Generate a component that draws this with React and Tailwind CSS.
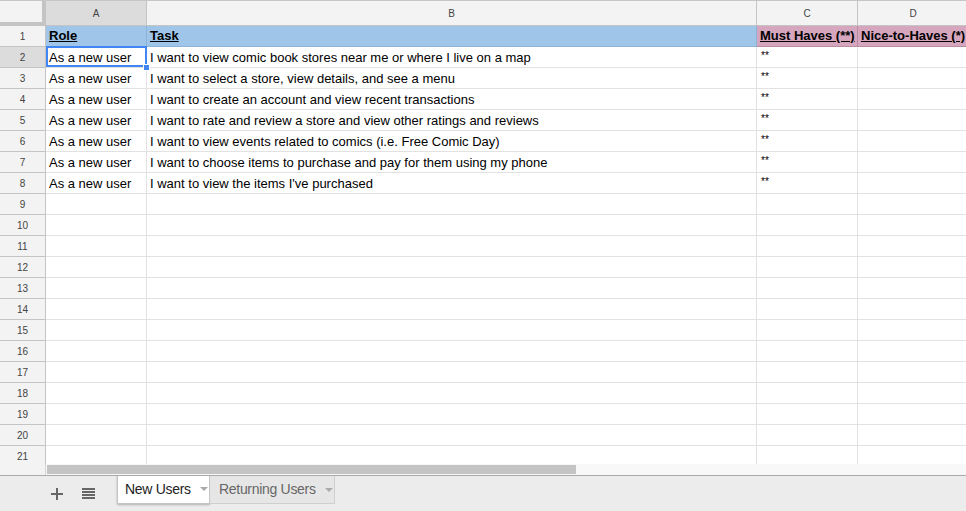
import React from 'react';

const rows = [
  { role: 'As a new user', task: 'I want to view comic book stores near me or where I live on a map', must: '**' },
  { role: 'As a new user', task: 'I want to select a store, view details, and see a menu', must: '**' },
  { role: 'As a new user', task: 'I want to create an account and view recent transactions', must: '**' },
  { role: 'As a new user', task: 'I want to rate and review a store and view other ratings and reviews', must: '**' },
  { role: 'As a new user', task: 'I want to view events related to comics (i.e. Free Comic Day)', must: '**' },
  { role: 'As a new user', task: 'I want to choose items to purchase and pay for them using my phone', must: '**' },
  { role: 'As a new user', task: "I want to view the items I've purchased", must: '**' },
];

const emptyRows = Array.from({ length: 13 }, (_, i) => i + 9);

const cell = 'border-r border-b border-[#e2e2e2] overflow-hidden whitespace-nowrap';

const Caret = ({ color }) => (
  <svg width="8" height="5" viewBox="0 0 8 5" className="ml-[9px] mt-[1px] shrink-0">
    <path d="M0 0 L8 0 L4 4 Z" fill={color} />
  </svg>
);

export default function App() {
  return (
    <div
      className="w-[966px] h-[511px] overflow-hidden bg-white flex flex-col text-[#222]"
      style={{ fontFamily: '"Liberation Sans", Arial, sans-serif' }}
    >
      {/* grid */}
      <div className="h-[464px] overflow-hidden flex flex-col">
        {/* column headers */}
        <div className="flex h-[26px] border-t border-[#c6c6c6] shrink-0">
          <div className="w-[46px] h-full bg-[#f3f3f3] border-r-[4px] border-b-[4px] border-[#c4c4c4]" />
          <div className="w-[101px] flex items-center justify-center bg-[#dcdcdc] border-r border-b border-[#c4c4c4] text-[10px] text-[#444]">A</div>
          <div className="w-[610px] flex items-center justify-center bg-[#f3f3f3] border-r border-b border-[#c4c4c4] text-[10px] text-[#444]">B</div>
          <div className="w-[101px] flex items-center justify-center bg-[#f3f3f3] border-r border-b border-[#c4c4c4] text-[10px] text-[#444]">C</div>
          <div className="flex-1 flex items-center justify-center bg-[#f3f3f3] border-b border-[#c4c4c4] text-[10px] text-[#444] pl-[2px]">D</div>
        </div>

        {/* row 1 */}
        <div className="flex h-[21px] shrink-0">
          <div className="w-[46px] flex items-center justify-center bg-[#f3f3f3] border-r border-b border-[#c4c4c4] text-[10px] text-[#444]">1</div>
          <div className="w-[101px] flex items-end pl-[3px] pb-[2px] bg-[#9fc5e8] border-r border-b border-[#8db3d6] font-bold underline text-[13px] leading-[16px] text-black">Role</div>
          <div className="w-[610px] flex items-end pl-[3px] pb-[2px] bg-[#9fc5e8] border-r border-b border-[#8db3d6] font-bold underline text-[13px] leading-[16px] text-black">Task</div>
          <div className="w-[101px] flex items-end pl-[3px] pb-[2px] bg-[#d5a6bd] border-r border-b border-[#b98ca2] font-bold underline text-[13px] leading-[16px] text-black whitespace-nowrap overflow-hidden">Must Haves (**)</div>
          <div className="flex-1 flex items-end pl-[3px] pb-[2px] bg-[#d5a6bd] border-b border-[#b98ca2] font-bold underline text-[13px] leading-[16px] text-black whitespace-nowrap overflow-hidden">Nice-to-Haves (*)</div>
        </div>

        {/* data rows */}
        {rows.map((r, i) => (
          <div key={i} className="flex h-[21px] shrink-0">
            <div className={`w-[46px] flex items-center justify-center border-r border-b border-[#c4c4c4] text-[10px] text-[#444] ${i === 0 ? 'bg-[#dcdcdc]' : 'bg-[#f3f3f3]'}`}>{i + 2}</div>
            <div className={`w-[101px] relative flex items-end pl-[3px] pb-[1px] text-[13px] leading-[16px] text-black ${i === 0 ? 'overflow-visible whitespace-nowrap border-r border-b border-[#e2e2e2]' : cell}`}>
              {r.role}
              {i === 0 && (
                <>
                  <div className="absolute left-0 top-[-1px] w-[101px] h-[21px] border-2 border-[#4285f4]" />
                  <div className="absolute right-[-4px] bottom-[-4px] w-[7px] h-[7px] bg-[#4285f4] border border-white z-10" />
                </>
              )}
            </div>
            <div className={`w-[610px] flex items-end pl-[3px] pb-[1px] text-[13px] leading-[16px] text-black ${cell}`}>{r.task}</div>
            <div className={`w-[101px] pl-[4px] pt-[3px] text-[10px] leading-[12px] text-black ${cell}`}>{r.must}</div>
            <div className="flex-1 border-b border-[#e2e2e2]" />
          </div>
        ))}

        {emptyRows.map((n) => (
          <div key={n} className="flex h-[21px] shrink-0">
            <div className="w-[46px] flex items-center justify-center bg-[#f3f3f3] border-r border-b border-[#c4c4c4] text-[10px] text-[#444]">{n}</div>
            <div className={`w-[101px] ${cell}`} />
            <div className={`w-[610px] ${cell}`} />
            <div className={`w-[101px] ${cell}`} />
            <div className="flex-1 border-b border-[#e2e2e2]" />
          </div>
        ))}
      </div>

      {/* horizontal scrollbar */}
      <div className="relative flex h-[12px] shrink-0 bg-[#f8f8f8] border-b border-[#ababab]">
        <div className="w-[46px] h-full bg-[#f3f3f3] border-r border-[#d4d4d4]" />
        <div className="pl-[1px] pt-[1px]">
          <div className="w-[529px] h-[9px] bg-[#c4c4c4]" />
        </div>
      </div>

      {/* sheet tabs */}
      <div className="flex-1 bg-[#ececec] flex items-start">
        <div className="w-[117px] shrink-0 h-[35px] flex items-center pl-[51px] gap-[19px] text-[#666]">
          <svg width="12" height="12" viewBox="0 0 12 12">
            <rect x="5" y="0" width="2" height="12" fill="#666" />
            <rect x="0" y="5" width="12" height="2" fill="#666" />
          </svg>
          <svg width="13" height="11" viewBox="0 0 13 11">
            <rect x="0" y="0" width="13" height="2" fill="#666" />
            <rect x="0" y="3" width="13" height="2" fill="#666" />
            <rect x="0" y="6" width="13" height="2" fill="#666" />
            <rect x="0" y="9" width="13" height="2" fill="#666" />
          </svg>
        </div>
        <div className="-mt-[1px] shrink-0 w-[93px] h-[29px] bg-white border border-t-0 border-[#c4c4c4] shadow-[0_1px_2px_rgba(0,0,0,0.25)] flex items-center pl-[7px] text-[14px] tracking-[-0.3px] text-[#222] whitespace-nowrap">
          New Users
          <Caret color="#aaa" />
        </div>
        <div className="shrink-0 w-[125px] h-[28px] bg-[#e6e6e6] border-r border-b border-[#cfcfcf] flex items-center pl-[9px] text-[14px] tracking-[-0.3px] text-[#666] whitespace-nowrap">
          Returning Users
          <Caret color="#aaa" />
        </div>
      </div>
    </div>
  );
}
